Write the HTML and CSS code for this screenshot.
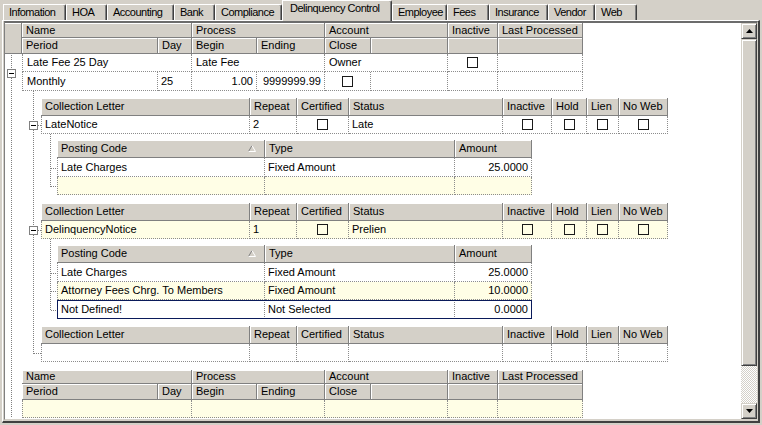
FILE: index.html
```html
<!DOCTYPE html>
<html>
<head>
<meta charset="utf-8">
<link rel="stylesheet" href="styles.css">
</head>
<body>
<div class="tabs">
  <div class="tab w-info">Infomation</div>
  <div class="tab w-hoa">HOA</div>
  <div class="tab w-acc">Accounting</div>
  <div class="tab w-bank">Bank</div>
  <div class="tab w-comp">Compliance</div>
  <div class="tab tab-sel w-del">Delinquency Control</div>
  <div class="tab w-emp">Employee</div>
  <div class="tab w-fees">Fees</div>
  <div class="tab w-ins">Insurance</div>
  <div class="tab w-ven">Vendor</div>
  <div class="tab w-web">Web</div>
</div>
<div class="panel">
  <div class="grid">
    <div class="gbody">
      <svg class="tree" width="736" height="396" viewBox="0 0 736 396">
        <g class="dots">
          <line x1="6.5" y1="32" x2="6.5" y2="46"/>
          <line x1="6.5" y1="55" x2="6.5" y2="395"/>
          <line x1="28.5" y1="68" x2="28.5" y2="98"/>
          <line x1="28.5" y1="107" x2="28.5" y2="203"/>
          <line x1="28.5" y1="212" x2="28.5" y2="331"/>
          <line x1="33" y1="102.5" x2="36" y2="102.5"/>
          <line x1="33" y1="207.5" x2="36" y2="207.5"/>
          <line x1="29" y1="330.5" x2="36" y2="330.5"/>
          <line x1="45.5" y1="111" x2="45.5" y2="164"/>
          <line x1="46" y1="145.5" x2="52" y2="145.5"/>
          <line x1="46" y1="163.5" x2="52" y2="163.5"/>
          <line x1="45.5" y1="216" x2="45.5" y2="288"/>
          <line x1="46" y1="250.5" x2="52" y2="250.5"/>
          <line x1="46" y1="268.5" x2="52" y2="268.5"/>
          <line x1="46" y1="287.5" x2="52" y2="287.5"/>
        </g>
        <g class="box">
          <rect x="2.5" y="46.5" width="8" height="8"/>
          <rect x="24.5" y="98.5" width="8" height="8"/>
          <rect x="24.5" y="203.5" width="8" height="8"/>
        </g>
        <g class="minus">
          <line x1="4" y1="50.5" x2="9" y2="50.5"/>
          <line x1="26" y1="102.5" x2="31" y2="102.5"/>
          <line x1="26" y1="207.5" x2="31" y2="207.5"/>
        </g>
      </svg>

      <div class="b1h">
        <div class="selcol"></div>
        <div class="b1h-rows">
          <div class="hr r15 c1a"><div class="h">Name</div><div class="h">Process</div><div class="h">Account</div><div class="h">Inactive</div><div class="h">Last Processed</div></div>
          <div class="hr r16 c1b"><div class="h">Period</div><div class="h">Day</div><div class="h">Begin</div><div class="h">Ending</div><div class="h">Close</div><div class="h"></div><div class="h"></div><div class="h"></div></div>
        </div>
      </div>

      <div class="rec1">
        <div class="dr r18 c1a"><div class="d p4">Late Fee 25 Day</div><div class="d p4">Late Fee</div><div class="d p4">Owner</div><div class="d ck"><span class="cb"></span></div><div class="d"></div></div>
        <div class="dr r19 c1b"><div class="d p4">Monthly</div><div class="d">25</div><div class="d num">1.00</div><div class="d num">9999999.99</div><div class="d ck"><span class="cb"></span></div><div class="d"></div><div class="d"></div><div class="d"></div></div>
      </div>

      <div class="band2 mt7">
        <div class="hr r18 c2"><div class="h">Collection Letter</div><div class="h">Repeat</div><div class="h">Certified</div><div class="h">Status</div><div class="h">Inactive</div><div class="h">Hold</div><div class="h">Lien</div><div class="h">No Web</div></div>
        <div class="dr r18 c2"><div class="d">LateNotice</div><div class="d">2</div><div class="d ck"><span class="cb"></span></div><div class="d">Late</div><div class="d ck"><span class="cb"></span></div><div class="d ck"><span class="cb"></span></div><div class="d ck"><span class="cb"></span></div><div class="d ck"><span class="cb"></span></div></div>
      </div>

      <div class="band3 mt6">
        <div class="hr r18 c3"><div class="h hsort"><span>Posting Code</span><svg class="sort" width="8" height="7" viewBox="0 0 8 7"><path d="M0.5 6.5 L4 0.5" stroke="#808080" fill="none"/><path d="M4 0.5 L7.5 6.5 L0.5 6.5" stroke="#ffffff" fill="none"/></svg></div><div class="h">Type</div><div class="h">Amount</div></div>
        <div class="dr r19 c3"><div class="d">Late Charges</div><div class="d">Fixed Amount</div><div class="d num">25.0000</div></div>
        <div class="dr r18 c3 yel"><div class="d"></div><div class="d"></div><div class="d"></div></div>
      </div>

      <div class="band2 mt8">
        <div class="hr r18 c2"><div class="h">Collection Letter</div><div class="h">Repeat</div><div class="h">Certified</div><div class="h">Status</div><div class="h">Inactive</div><div class="h">Hold</div><div class="h">Lien</div><div class="h">No Web</div></div>
        <div class="dr r18 c2 yel"><div class="d">DelinquencyNotice</div><div class="d">1</div><div class="d ck"><span class="cb"></span></div><div class="d">Prelien</div><div class="d ck"><span class="cb"></span></div><div class="d ck"><span class="cb"></span></div><div class="d ck"><span class="cb"></span></div><div class="d ck"><span class="cb"></span></div></div>
      </div>

      <div class="band3 mt6">
        <div class="hr r18 c3"><div class="h hsort"><span>Posting Code</span><svg class="sort" width="8" height="7" viewBox="0 0 8 7"><path d="M0.5 6.5 L4 0.5" stroke="#808080" fill="none"/><path d="M4 0.5 L7.5 6.5 L0.5 6.5" stroke="#ffffff" fill="none"/></svg></div><div class="h">Type</div><div class="h">Amount</div></div>
        <div class="dr r19 c3"><div class="d">Late Charges</div><div class="d">Fixed Amount</div><div class="d num">25.0000</div></div>
        <div class="dr r18 c3 yel"><div class="d">Attorney Fees Chrg. To Members</div><div class="d">Fixed Amount</div><div class="d num">10.0000</div></div>
        <div class="dr r19 c3 focus"><div class="d">Not Defined!</div><div class="d">Not Selected</div><div class="d num">0.0000</div></div>
      </div>

      <div class="band2 mt7">
        <div class="hr r18 c2"><div class="h">Collection Letter</div><div class="h">Repeat</div><div class="h">Certified</div><div class="h">Status</div><div class="h">Inactive</div><div class="h">Hold</div><div class="h">Lien</div><div class="h">No Web</div></div>
        <div class="dr r18 c2"><div class="d"></div><div class="d"></div><div class="d"></div><div class="d"></div><div class="d"></div><div class="d"></div><div class="d"></div><div class="d"></div></div>
      </div>

      <div class="band1b mt8">
        <div class="hr r14 c1a"><div class="h">Name</div><div class="h">Process</div><div class="h">Account</div><div class="h">Inactive</div><div class="h">Last Processed</div></div>
        <div class="hr r16 c1b"><div class="h">Period</div><div class="h">Day</div><div class="h">Begin</div><div class="h">Ending</div><div class="h">Close</div><div class="h"></div><div class="h"></div><div class="h"></div></div>
        <div class="dr r18 c1a yel"><div class="d"></div><div class="d"></div><div class="d"></div><div class="d"></div><div class="d"></div></div>
      </div>
    </div>
    <div class="vscroll">
      <div class="sbtn"><svg width="7" height="4" viewBox="0 0 7 4"><path d="M3.5 0 L7 4 L0 4 Z" fill="#000"/></svg></div>
      <div class="thumb"></div>
      <div class="track"></div>
      <div class="sbtn"><svg width="7" height="4" viewBox="0 0 7 4"><path d="M0 0 L7 0 L3.5 4 Z" fill="#000"/></svg></div>
    </div>
  </div>
</div>
</body>
</html>
```
FILE: styles.css
```css
html, body {
  margin: 0;
  padding: 0;
}
body {
  background: #d4d0c8;
  font-family: "Liberation Sans", Arial, sans-serif;
  font-size: 11px;
  color: #000;
  width: 762px;
  height: 425px;
  overflow: hidden;
}

/* tabs */
.tabs {
  display: flex;
  align-items: flex-end;
  height: 20px;
  padding-left: 3px;
  box-sizing: border-box;
  position: relative;
  z-index: 2;
}
.tab {
  height: 16px;
  box-sizing: border-box;
  border-top: 1px solid #fff;
  border-left: 1px solid #fff;
  border-right: 1px solid #404040;
  box-shadow: inset -1px 0 0 #808080;
  border-top-right-radius: 2px;
  padding-left: 5px;
  line-height: 14px;
  letter-spacing: -0.5px;
  white-space: nowrap;
  overflow: hidden;
}
.tab-sel {
  height: 21px;
  margin-bottom: -1px;
  padding-left: 7px;
  padding-top: 1px;
  line-height: 13px;
  background: #d4d0c8;
}
.w-info { width: 63px; }
.w-hoa { width: 41px; }
.w-acc { width: 67px; }
.w-bank { width: 41px; }
.w-comp { width: 67px; }
.w-del { width: 110px; }
.w-emp { width: 55px; }
.w-fees { width: 42px; }
.w-ins { width: 59px; }
.w-ven { width: 47px; }
.w-web { width: 42px; }

/* panel */
.panel {
  margin-left: 2px;
  width: 758px;
  box-sizing: border-box;
  border-top: 1px solid #fff;
  border-left: 1px solid #fff;
  border-right: 2px solid #404040;
  border-bottom: 2px solid #404040;
  padding: 0 0 1px 1px;
  position: relative;
  z-index: 1;
}
.grid {
  display: flex;
  border-top: 2px solid #6c6c6c;
  border-left: 1px solid #808080;
  border-right: 1px solid #d4d0c8;
  border-bottom: 1px solid #d4d0c8;
  height: 399px;
  box-sizing: border-box;
}
.gbody {
  position: relative;
  width: 736px;
  height: 396px;
  background: #fff;
  overflow: hidden;
}
.tree {
  position: absolute;
  left: 0;
  top: 0;
  pointer-events: none;
  shape-rendering: crispEdges;
}
.tree .dots line {
  stroke: #808080;
  stroke-width: 1;
  stroke-dasharray: 1 1;
}
.tree .box rect {
  fill: #fff;
  stroke: #808080;
  stroke-width: 1;
}
.tree .minus line {
  stroke: #000;
  stroke-width: 1;
}

/* rows */
.hr, .dr {
  display: grid;
  box-sizing: border-box;
}
.hr {
  border-bottom: 1px solid #808080;
}
.r14 { height: 14px; line-height: 13px; }
.r15 { height: 15px; line-height: 14px; }
.r16 { height: 16px; line-height: 15px; }
.r18 { height: 18px; line-height: 17px; }
.r19 { height: 19px; line-height: 18px; }

.c1a { grid-template-columns: 170px 133px 123px 50px 85px; }
.c1b { grid-template-columns: 136px 34px 65px 68px 46px 77px 50px 85px; }
.c2 { grid-template-columns: 209px 47px 52px 154px 49px 35px 32px 49px; }
.c3 { grid-template-columns: 208px 190px 77px; }

.h {
  background: #d4d0c8;
  border-right: 1px solid #808080;
  box-shadow: inset 1px 1px 0 #fff;
  padding-left: 4px;
  white-space: nowrap;
  overflow: hidden;
  box-sizing: border-box;
}
.hsort {
  display: flex;
  justify-content: space-between;
  align-items: center;
  padding-right: 8px;
}
.sort { display: block; margin-top: -1px; }

.d {
  border-right: 1px dotted #8c8c8c;
  border-bottom: 1px dotted #8c8c8c;
  padding: 0 3px;
  white-space: nowrap;
  overflow: hidden;
  box-sizing: border-box;
}
.dr > .d:first-child { border-left: 1px dotted #8c8c8c; }
.p4 { padding-left: 4px; }
.num { text-align: right; }
.ck {
  display: flex;
  align-items: center;
  justify-content: center;
}
.cb {
  display: block;
  width: 11px;
  height: 11px;
  box-sizing: border-box;
  border: 1px solid #1a1a1a;
  background: transparent;
}
.yel { background: #fffee6; }
.focus {
  outline: 1px solid #0a1a5a;
  outline-offset: -1px;
  position: relative;
}

/* bands */
.b1h {
  display: flex;
}
.selcol {
  width: 17px;
  height: 31px;
  box-sizing: border-box;
  background: #d4d0c8;
  border-right: 1px solid #808080;
  border-bottom: 1px solid #808080;
  box-shadow: inset 0 1px 0 #fff;
}
.rec1 { margin-left: 17px; width: 561px; }
.band2 { margin-left: 36px; width: 627px; }
.band3 { margin-left: 52px; width: 475px; }
.band1b { margin-left: 17px; width: 561px; }
.mt6 { margin-top: 6px; }
.mt7 { margin-top: 7px; }
.mt8 { margin-top: 8px; }

/* scrollbar */
.vscroll {
  width: 16px;
  height: 396px;
  display: flex;
  flex-direction: column;
}
.sbtn, .thumb {
  box-sizing: border-box;
  background: #d4d0c8;
  border-top: 1px solid #d4d0c8;
  border-left: 1px solid #d4d0c8;
  border-right: 1px solid #404040;
  border-bottom: 1px solid #404040;
  box-shadow: inset 1px 1px 0 #fff, inset -1px -1px 0 #808080;
}
.sbtn {
  height: 16px;
  display: flex;
  align-items: center;
  justify-content: center;
}
.sbtn svg { display: block; }
.thumb { height: 327px; }
.track {
  flex: 1;
  background: repeating-conic-gradient(#d4d0c8 0 25%, #ffffff 0 50%) 0 0 / 2px 2px;
}
```
